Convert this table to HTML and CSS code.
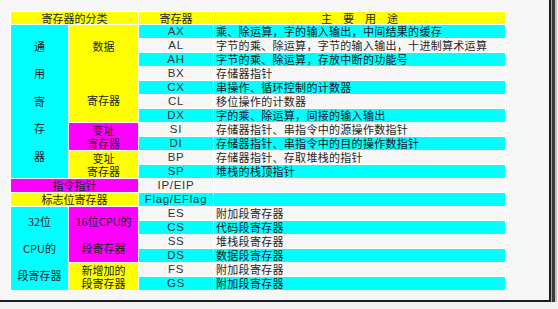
FILE: index.html
```html
<!DOCTYPE html>
<html lang="zh-CN">
<head>
<meta charset="utf-8">
<title>寄存器的分类</title>
<link rel="stylesheet" href="styles.css">
</head>
<body>
<div class="frame">
<table class="regs">
<colgroup><col class="w1"><col class="w2"><col class="w3"><col class="w4"></colgroup>
<tr class="hd"><th colspan="2">寄存器的分类</th><th>寄存器</th><th>主　要　用　途</th></tr>
<tr class="c"><td rowspan="11" class="cy g1">通<br>用<br>寄<br>存<br>器</td><td rowspan="7" class="ye g2">数据<br><br>寄存器</td><td class="reg">AX</td><td class="use">乘、除运算，字的输入输出，中间结果的缓存</td></tr>
<tr><td class="reg">AL</td><td class="use">字节的乘、除运算，字节的输入输出，十进制算术运算</td></tr>
<tr class="c"><td class="reg">AH</td><td class="use">字节的乘、除运算，存放中断的功能号</td></tr>
<tr><td class="reg">BX</td><td class="use">存储器指针</td></tr>
<tr class="c"><td class="reg">CX</td><td class="use">串操作、循环控制的计数器</td></tr>
<tr><td class="reg">CL</td><td class="use">移位操作的计数器</td></tr>
<tr class="c"><td class="reg">DX</td><td class="use">字的乘、除运算，间接的输入输出</td></tr>
<tr><td rowspan="2" class="mg g3">变址<br>寄存器</td><td class="reg">SI</td><td class="use">存储器指针、串指令中的源操作数指针</td></tr>
<tr class="c"><td class="reg">DI</td><td class="use">存储器指针、串指令中的目的操作数指针</td></tr>
<tr><td rowspan="2" class="ye g3">变址<br>寄存器</td><td class="reg">BP</td><td class="use">存储器指针、存取堆栈的指针</td></tr>
<tr class="c"><td class="reg">SP</td><td class="use">堆栈的栈顶指针</td></tr>
<tr><td colspan="2" class="mg">指令指针</td><td class="reg">IP/EIP</td><td class="use"></td></tr>
<tr class="c"><td colspan="2" class="ye">标志位寄存器</td><td class="reg">Flag/EFlag</td><td class="use"></td></tr>
<tr><td rowspan="6" class="cy g4">32位<br>CPU的<br>段寄存器</td><td rowspan="4" class="mg g4">16位CPU的<br>段寄存器</td><td class="reg">ES</td><td class="use">附加段寄存器</td></tr>
<tr class="c"><td class="reg">CS</td><td class="use">代码段寄存器</td></tr>
<tr><td class="reg">SS</td><td class="use">堆栈段寄存器</td></tr>
<tr class="c"><td class="reg">DS</td><td class="use">数据段寄存器</td></tr>
<tr><td rowspan="2" class="ye g3">新增加的<br>段寄存器</td><td class="reg">FS</td><td class="use">附加段寄存器</td></tr>
<tr class="c"><td class="reg">GS</td><td class="use">附加段寄存器</td></tr>
</table>
</div>
</body>
</html>
```

FILE: styles.css
```css
html, body {
  margin: 0;
  padding: 0;
  background: #f1f1f1;
  overflow: hidden;
}

.frame {
  margin: -10px 0 0 -10px;
  width: 561px;
  height: 312px;
  box-sizing: border-box;
  padding: 21px 0 0 20px;
  background: #f7f7f7;
  border-right: 2px solid #1e1e1e;
  border-bottom: 2px solid #1e1e1e;
  box-shadow: 1px 1px 0 #a8a8a8, 4px 4px 0 #3a3a3a, 6px 6px 0 #c4c4c4;
}

.regs {
  table-layout: fixed;
  width: 496px;
  border-collapse: separate;
  border-spacing: 1px;
  background: #ffffff;
  font-family: "Noto Sans CJK SC", "Liberation Sans", sans-serif;
  font-size: 11px;
  color: #222;
}

.w1 { width: 57px; }
.w2 { width: 69px; }
.w3 { width: 74px; }
.w4 { width: 291px; }

.regs th,
.regs td {
  padding: 0;
  height: 13px;
  line-height: 13px;
  text-align: center;
  vertical-align: middle;
  white-space: nowrap;
}

.regs th {
  height: 12px;
  line-height: 12px;
  font-weight: normal;
  background: #ffff00;
  color: #1e1e1e;
}

.regs tr { background: #f7f7f7; }
.regs tr.c { background: #00ffff; }

.regs td.reg {
  font-family: "Liberation Sans", Arial, sans-serif;
  font-size: 11.5px;
  letter-spacing: 0.7px;
  color: #333;
}

.regs td.use {
  text-align: left;
  padding-left: 2px;
  letter-spacing: 0.3px;
  color: #262626;
}

.regs tr.c td.use { color: #141428; }

.cy { background: #00ffff; }
.ye { background: #ffff00; }
.mg { background: #ff00ff; }

.regs td.g1 { line-height: 27.5px; }
.regs td.g2 { line-height: 27px; }
.regs td.g3 { line-height: 13px; }
.regs td.g4 { line-height: 27px; }
```
